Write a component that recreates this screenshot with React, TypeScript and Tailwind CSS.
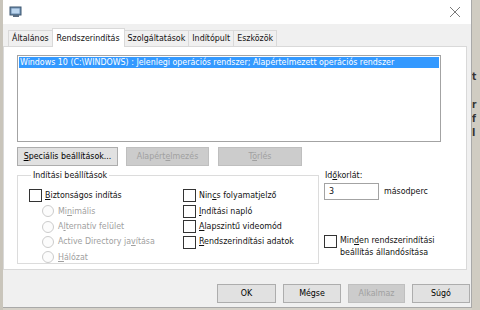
import React from "react";

const font = { fontFamily: '"DejaVu Sans Condensed", "Liberation Sans", Arial, sans-serif' };

function U({ children }: { children: React.ReactNode }) {
  return <span className="underline underline-offset-[1px]">{children}</span>;
}

function Checkbox({ children }: { children: React.ReactNode }) {
  return (
    <div className="flex items-center h-[15.4px] gap-[3px] whitespace-nowrap">
      <span className="w-[13px] h-[13px] border border-[#333333] bg-white shrink-0" />
      <span>{children}</span>
    </div>
  );
}

function Radio({ children }: { children: React.ReactNode }) {
  return (
    <div className="flex items-center h-[15.4px] gap-[4px] text-[#a0a0a0] pl-[13px] whitespace-nowrap">
      <span className="w-[12px] h-[12px] rounded-full border border-[#cccccc] bg-[#fcfcfc] shrink-0" />
      <span>{children}</span>
    </div>
  );
}

function Button({
  children,
  disabled,
  className,
}: {
  children: React.ReactNode;
  disabled?: boolean;
  className?: string;
}) {
  return (
    <button
      className={
        "h-[19px] border text-center leading-none whitespace-nowrap " +
        (disabled
          ? "bg-[#cccccc] border-[#bfbfbf] text-[#a0a0a0] "
          : "bg-[#e1e1e1] border-[#adadad] text-black ") +
        (className ?? "")
      }
    >
      {children}
    </button>
  );
}

const tabs = ["Általános", "Rendszerindítás", "Szolgáltatások", "Indítópult", "Eszközök"];

export default function App() {
  return (
    <div className="w-[480px] h-[310px] flex bg-[#d5d1c8] overflow-hidden text-[8.8px] text-[#111]" style={font}>
      <div className="w-[3px] bg-[#c9c5bb]" />
      <div className="w-[469px] h-[308px] flex flex-col bg-[#f0f0f0] border-r border-b border-[#a9a9a9]">
        {/* title bar */}
        <div className="h-[24px] bg-white flex items-center justify-between pl-[6px] pr-[10px]">
          <svg width="14" height="14" viewBox="0 0 14 14">
            <rect x="1" y="2" width="11" height="8" fill="#6f8fb0" stroke="#3d5670" />
            <rect x="2.5" y="3.5" width="8" height="5" fill="#bcd6ef" />
            <rect x="4" y="10" width="6" height="2" fill="#5a6c80" />
          </svg>
          <svg width="12" height="12" viewBox="0 0 12 12">
            <path d="M1 1 L11 11 M11 1 L1 11" stroke="#7a7a7a" strokeWidth="1" />
          </svg>
        </div>

        {/* tabs */}
        <div className="flex items-end h-[22px] pl-[5px]">
          {tabs.map((t, i) =>
            i === 1 ? (
              <div
                key={t}
                className="h-[19px] px-[4px] bg-white border border-b-0 border-[#d9d9d9] -mb-[1px] -ml-[1px] relative z-10 flex items-start pt-[3px] whitespace-nowrap"
              >
                {t}
              </div>
            ) : (
              <div
                key={t}
                className="h-[16px] px-[3px] bg-[#f0f0f0] border border-b-0 border-[#d9d9d9] -ml-[1px] flex items-center first:ml-0 whitespace-nowrap"
              >
                {t}
              </div>
            )
          )}
        </div>

        {/* panel */}
        <div className="h-[224px] bg-white border border-[#d9d9d9] w-[464px] pl-[13px] pt-[8px]">
          <div className="w-[424px] h-[87px] border border-[#a3a3a3] p-[1px]">
            <div className="h-[11px] bg-[#3399ff] text-white leading-[11px] pl-[1px] whitespace-nowrap">
              Windows 10 (C:\WINDOWS) : Jelenlegi operációs rendszer; Alapértelmezett operációs rendszer
            </div>
          </div>

          <div className="flex mt-[5px] gap-[8px]">
            <Button className="w-[101px]">
              <U>S</U>peciális beállítások...
            </Button>
            <Button disabled className="w-[83px]">
              Alapért<U>e</U>lmezés
            </Button>
            <Button disabled className="w-[84px] ml-[1px]">
              T<U>ö</U>rlés
            </Button>
          </div>

          <div className="flex mt-[3px]">
            <fieldset className="w-[302px] h-[95px] border border-[#dcdcdc] pl-[11px] pt-[6px]">
              <legend className="px-[2px] ml-[2px]">
                Indítási beállítások
              </legend>
              <div className="flex">
                <div className="w-[154px]">
                  <Checkbox>
                    <U>B</U>iztonságos indítás
                  </Checkbox>
                  <Radio>
                    Mi<U>n</U>imális
                  </Radio>
                  <Radio>
                    A<U>l</U>ternatív felület
                  </Radio>
                  <Radio>
                    Active Directory ja<U>v</U>ítása
                  </Radio>
                  <Radio>
                    <U>H</U>álózat
                  </Radio>
                </div>
                <div>
                  <Checkbox>
                    Nin<U>c</U>s folyamatjelző
                  </Checkbox>
                  <Checkbox>
                    <U>I</U>ndítási napló
                  </Checkbox>
                  <Checkbox>
                    <U>A</U>lapszintű videomód
                  </Checkbox>
                  <Checkbox>
                    <U>R</U>endszerindítási adatok
                  </Checkbox>
                </div>
              </div>
            </fieldset>

            <div className="ml-[5px] pt-[0px] flex flex-col">
              <div className="pl-[1px]">
                Id<U>ő</U>korlát:
              </div>
              <div className="flex items-center gap-[5px] mt-[1px]">
                <div className="w-[55px] h-[17px] border border-[#a3a3a3] bg-white pl-[4px] leading-[15px]">3</div>
                <span>másodperc</span>
              </div>
              <div className="flex items-start gap-[3px] mt-[34px]">
                <span className="w-[13px] h-[13px] border border-[#333333] bg-white shrink-0 mt-[1px]" />
                <span className="leading-[12px]">
                  Min<U>d</U>en rendszerindítási
                  <br />
                  beállítás állandósítása
                </span>
              </div>
            </div>
          </div>
        </div>

        {/* bottom buttons */}
        <div className="flex justify-end gap-[7px] pr-[1px] mt-[14px]">
          <Button className="w-[59px]">OK</Button>
          <Button className="w-[58px]">Mégse</Button>
          <Button disabled className="w-[57px]">
            Alkalmaz
          </Button>
          <Button className="w-[58px]">Súgó</Button>
        </div>
      </div>
      <div className="flex-1 bg-[#d0ccc2] text-[#333] font-bold text-[10px] leading-[14px] pt-[70px] overflow-hidden">
        t
        <br />
        <br />r
        <br />f
        <br />I
      </div>
    </div>
  );
}
